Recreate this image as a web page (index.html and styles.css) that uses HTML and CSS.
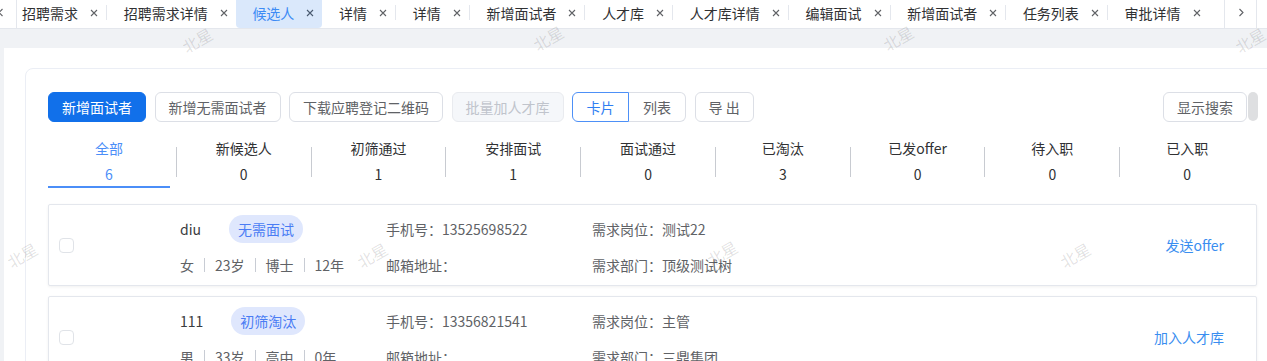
FILE: index.html
```html
<!DOCTYPE html>
<html lang="zh-CN">
<head>
    <meta charset="UTF-8">
    <title>候选人</title>
    <link rel="stylesheet" href="styles.css">
</head>
<body>
    <div class="tabs-bar">
        <div class="tab-arrow left">
            <svg width="6" height="9" viewBox="0 0 6 9"><path d="M4.5 1L1 4.5L4.5 8" fill="none" stroke="#606266" stroke-width="1.1"/></svg>
        </div>
        <div class="tab-list">
            <div class="tab first">招聘需求<svg class="tab-close" viewBox="0 0 8 8"><path d="M1 1L7 7M7 1L1 7"/></svg></div>
            <span class="tab-sep"></span>
            <div class="tab">招聘需求详情<svg class="tab-close" viewBox="0 0 8 8"><path d="M1 1L7 7M7 1L1 7"/></svg></div>
            <div class="tab active">候选人<svg class="tab-close" viewBox="0 0 8 8"><path d="M1 1L7 7M7 1L1 7"/></svg></div>
            <div class="tab">详情<svg class="tab-close" viewBox="0 0 8 8"><path d="M1 1L7 7M7 1L1 7"/></svg></div>
            <span class="tab-sep"></span>
            <div class="tab">详情<svg class="tab-close" viewBox="0 0 8 8"><path d="M1 1L7 7M7 1L1 7"/></svg></div>
            <span class="tab-sep"></span>
            <div class="tab">新增面试者<svg class="tab-close" viewBox="0 0 8 8"><path d="M1 1L7 7M7 1L1 7"/></svg></div>
            <span class="tab-sep"></span>
            <div class="tab">人才库<svg class="tab-close" viewBox="0 0 8 8"><path d="M1 1L7 7M7 1L1 7"/></svg></div>
            <span class="tab-sep"></span>
            <div class="tab">人才库详情<svg class="tab-close" viewBox="0 0 8 8"><path d="M1 1L7 7M7 1L1 7"/></svg></div>
            <span class="tab-sep"></span>
            <div class="tab">编辑面试<svg class="tab-close" viewBox="0 0 8 8"><path d="M1 1L7 7M7 1L1 7"/></svg></div>
            <span class="tab-sep"></span>
            <div class="tab">新增面试者<svg class="tab-close" viewBox="0 0 8 8"><path d="M1 1L7 7M7 1L1 7"/></svg></div>
            <span class="tab-sep"></span>
            <div class="tab">任务列表<svg class="tab-close" viewBox="0 0 8 8"><path d="M1 1L7 7M7 1L1 7"/></svg></div>
            <span class="tab-sep"></span>
            <div class="tab">审批详情<svg class="tab-close" viewBox="0 0 8 8"><path d="M1 1L7 7M7 1L1 7"/></svg></div>
        </div>
        <div class="tab-arrow right">
            <svg width="6" height="9" viewBox="0 0 6 9"><path d="M1.5 1L5 4.5L1.5 8" fill="none" stroke="#606266" stroke-width="1.1"/></svg>
        </div>
    </div>

    <div class="main">
        <div class="panel">
            <div class="toolbar">
                <button class="btn primary">新增面试者</button>
                <button class="btn">新增无需面试者</button>
                <button class="btn">下载应聘登记二维码</button>
                <button class="btn disabled">批量加人才库</button>
                <div class="btn-group">
                    <button class="btn checked">卡片</button>
                    <button class="btn">列表</button>
                </div>
                <button class="btn">导 出</button>
                <div class="toolbar-right">
                    <button class="btn">显示搜索</button>
                    <span class="thumb"></span>
                </div>
            </div>

            <div class="status-row">
                <div class="status-item active">
                    <div class="status-label">全部</div>
                    <div class="status-num">6</div>
                    <div class="status-bar"></div>
                </div>
                <span class="status-divider"></span>
                <div class="status-item">
                    <div class="status-label">新候选人</div>
                    <div class="status-num">0</div>
                    <div class="status-bar"></div>
                </div>
                <span class="status-divider"></span>
                <div class="status-item">
                    <div class="status-label">初筛通过</div>
                    <div class="status-num">1</div>
                    <div class="status-bar"></div>
                </div>
                <span class="status-divider"></span>
                <div class="status-item">
                    <div class="status-label">安排面试</div>
                    <div class="status-num">1</div>
                    <div class="status-bar"></div>
                </div>
                <span class="status-divider"></span>
                <div class="status-item">
                    <div class="status-label">面试通过</div>
                    <div class="status-num">0</div>
                    <div class="status-bar"></div>
                </div>
                <span class="status-divider"></span>
                <div class="status-item">
                    <div class="status-label">已淘汰</div>
                    <div class="status-num">3</div>
                    <div class="status-bar"></div>
                </div>
                <span class="status-divider"></span>
                <div class="status-item">
                    <div class="status-label">已发offer</div>
                    <div class="status-num">0</div>
                    <div class="status-bar"></div>
                </div>
                <span class="status-divider"></span>
                <div class="status-item">
                    <div class="status-label">待入职</div>
                    <div class="status-num">0</div>
                    <div class="status-bar"></div>
                </div>
                <span class="status-divider"></span>
                <div class="status-item">
                    <div class="status-label">已入职</div>
                    <div class="status-num">0</div>
                    <div class="status-bar"></div>
                </div>
            </div>

            <div class="cand-list">
                <div class="cand-card">
                    <span class="check"></span>
                    <div class="cand-col basic">
                        <div class="cand-line top"><span class="cand-name">diu</span><span class="tag">无需面试</span></div>
                        <div class="cand-line bottom">女<i class="bar"></i>23岁<i class="bar"></i>博士<i class="bar"></i>12年</div>
                    </div>
                    <div class="cand-col info">
                        <div class="cand-line top">手机号：13525698522</div>
                        <div class="cand-line bottom">邮箱地址：</div>
                    </div>
                    <div class="cand-col info wide">
                        <div class="cand-line top">需求岗位：测试22</div>
                        <div class="cand-line bottom">需求部门：顶级测试树</div>
                    </div>
                    <a class="cand-action">发送offer</a>
                </div>
                <div class="cand-card">
                    <span class="check"></span>
                    <div class="cand-col basic">
                        <div class="cand-line top"><span class="cand-name">111</span><span class="tag">初筛淘汰</span></div>
                        <div class="cand-line bottom">男<i class="bar"></i>33岁<i class="bar"></i>高中<i class="bar"></i>0年</div>
                    </div>
                    <div class="cand-col info">
                        <div class="cand-line top">手机号：13356821541</div>
                        <div class="cand-line bottom">邮箱地址：</div>
                    </div>
                    <div class="cand-col info wide">
                        <div class="cand-line top">需求岗位：主管</div>
                        <div class="cand-line bottom">需求部门：三鼎集团</div>
                    </div>
                    <a class="cand-action">加入人才库</a>
                </div>
            </div>
        </div>
    </div>

    <div class="watermark">
        <span class="wm wm-1">北星</span>
        <span class="wm wm-2">北星</span>
        <span class="wm wm-3">北星</span>
        <span class="wm wm-4">北星</span>
        <span class="wm wm-5">北星</span>
        <span class="wm wm-6">北星</span>
        <span class="wm wm-7">北星</span>
        <span class="wm wm-8">北星</span>
    </div>
</body>
</html>
```

FILE: styles.css
```css
body {
    margin: 0;
    width: 1267px;
    height: 361px;
    overflow: hidden;
    position: relative;
    background: #f0f2f5;
    color: #303133;
    font-family: "Noto Sans CJK SC", "Noto Sans", sans-serif;
    font-size: 14px;
}

/* tab strip */
.tabs-bar {
    display: flex;
    height: 28px;
    background: #fff;
    border-bottom: 1px solid #e4e7ed;
}
.tab-arrow {
    display: flex;
    align-items: center;
    box-sizing: border-box;
    height: 28px;
    padding-bottom: 3px;
}
.tab-arrow.left {
    width: 17px;
    border-right: 1px solid #e4e7ed;
}
.tab-arrow.left svg {
    margin-left: -2px;
}
.tab-arrow.right {
    width: 33px;
    justify-content: center;
    border-left: 1px solid #e4e7ed;
    border-right: 1px solid #e4e7ed;
    margin-right: 10px;
}
.tab-list {
    flex: 1;
    display: flex;
    align-items: flex-start;
    overflow: hidden;
}
.tab {
    display: flex;
    align-items: center;
    height: 28px;
    box-sizing: border-box;
    padding: 0 8px 3px 16.7px;
    white-space: nowrap;
    color: #303133;
    font-size: 14px;
}
.tab.first {
    padding-left: 5px;
}
.tab.active {
    background: #dae8fb;
    color: #3d8bf5;
    border-radius: 0 0 4px 4px;
}
.tab-close {
    width: 8px;
    height: 8px;
    margin-left: 12px;
    stroke: #606266;
    stroke-width: 1.1;
}
.tab.active .tab-close {
    stroke: #4a5a70;
}
.tab-sep {
    width: 1px;
    height: 15px;
    margin-top: 5px;
    background: #e4e7ed;
}

/* page */
.main {
    margin: 19px 0 0 4px;
    height: 313px;
    padding: 20px 0 0 21px;
    box-sizing: border-box;
    background: #fff;
    overflow: hidden;
}
.panel {
    width: 1256px;
    box-sizing: border-box;
    border: 1px solid #ebeef5;
    border-radius: 8px;
    padding: 23px 22px 0;
    height: 400px;
}

.toolbar {
    display: flex;
    align-items: center;
    gap: 8.5px;
    height: 30px;
}
.btn {
    height: 30px;
    box-sizing: border-box;
    padding: 0 13px;
    border: 1px solid #dcdfe6;
    border-radius: 6px;
    background: #fff;
    color: #606266;
    font-family: inherit;
    font-size: 14px;
    line-height: 28px;
    white-space: nowrap;
    cursor: pointer;
}
.btn.primary {
    background: #1170ea;
    border-color: #1170ea;
    color: #fff;
}
.btn.disabled {
    background: #f5f7fa;
    border-color: #e9ebef;
    color: #c0c4cc;
    cursor: not-allowed;
}
.btn-group {
    display: flex;
}
.btn-group .btn {
    width: 57px;
    padding: 0;
}
.btn-group .btn:first-child {
    border-radius: 6px 0 0 6px;
}
.btn-group .btn:last-child {
    border-radius: 0 6px 6px 0;
    border-left: none;
}
.btn.checked {
    border-color: #4d90f7;
    color: #2f7ef2;
}
.toolbar-right {
    margin-left: auto;
    display: flex;
    align-items: flex-start;
    gap: 1px;
    height: 30px;
}
.toolbar-right .btn {
    width: 84px;
    padding: 0;
}
.thumb {
    width: 10px;
    height: 29px;
    border-radius: 5px;
    background: #dedfe1;
}

/* status tabs */
.status-row {
    display: flex;
    align-items: center;
    margin: 14px 4px 0 -6px;
}
.status-item {
    flex: 1 1 0;
    text-align: center;
    padding-top: 2px;
}
.status-label,
.status-num {
    line-height: 20px;
    color: #303133;
}
.status-num {
    margin-top: 6px;
}
.status-bar {
    height: 2px;
    margin: 2px 6px 0;
}
.status-item.active .status-label,
.status-item.active .status-num {
    color: #4b8ef8;
}
.status-item.active .status-bar {
    background: #4b8ef8;
}
.status-divider {
    width: 1px;
    height: 30px;
    background: #c8cbd1;
}

/* candidate cards */
.cand-list {
    display: flex;
    flex-direction: column;
    gap: 10px;
    margin: 16px 1px 0 0;
}
.cand-card {
    display: flex;
    align-items: center;
    border: 1px solid #e4e7ed;
    border-radius: 2px;
    box-shadow: 0 1px 3px rgba(0, 0, 0, 0.06);
    padding: 10px 32px 10px 10px;
    background: #fff;
}
.check {
    width: 15px;
    height: 15px;
    box-sizing: border-box;
    border: 1px solid #e0e3e8;
    border-radius: 4px;
    margin-right: 106px;
}
.cand-col {
    width: 206px;
}
.cand-col.wide {
    flex: 1;
}
.cand-line {
    display: flex;
    align-items: center;
    white-space: nowrap;
}
.cand-line.top {
    height: 28px;
}
.cand-line.bottom {
    height: 20px;
    margin-top: 12px;
}
.basic .cand-line.bottom {
    color: #606266;
}
.info {
    color: #606266;
}
.cand-name {
    color: #3a3c40;
}
.tag {
    margin-left: 28px;
    height: 28px;
    line-height: 28px;
    padding: 0 9px;
    border-radius: 14px;
    background: #dfe7fd;
    color: #4a7cf4;
}
.bar {
    display: inline-block;
    width: 1px;
    height: 14px;
    margin: 0 10px;
    background: #c8ccd4;
}
.cand-action {
    color: #3a8ef0;
    white-space: nowrap;
    cursor: pointer;
}

/* watermark overlay */
.watermark {
    position: absolute;
    inset: 0;
    overflow: hidden;
    pointer-events: none;
}
.wm {
    position: absolute;
    font-size: 16px;
    color: rgba(0, 0, 0, 0.12);
    transform: translate(-50%, -50%) rotate(-30deg);
    white-space: nowrap;
}
.wm-1 { left: 197px; top: 40px; }
.wm-2 { left: 548px; top: 38px; }
.wm-3 { left: 898px; top: 38px; }
.wm-4 { left: 1250px; top: 40px; }
.wm-5 { left: 22px; top: 255px; }
.wm-6 { left: 372px; top: 255px; }
.wm-7 { left: 722px; top: 253px; }
.wm-8 { left: 1075px; top: 255px; }
```
